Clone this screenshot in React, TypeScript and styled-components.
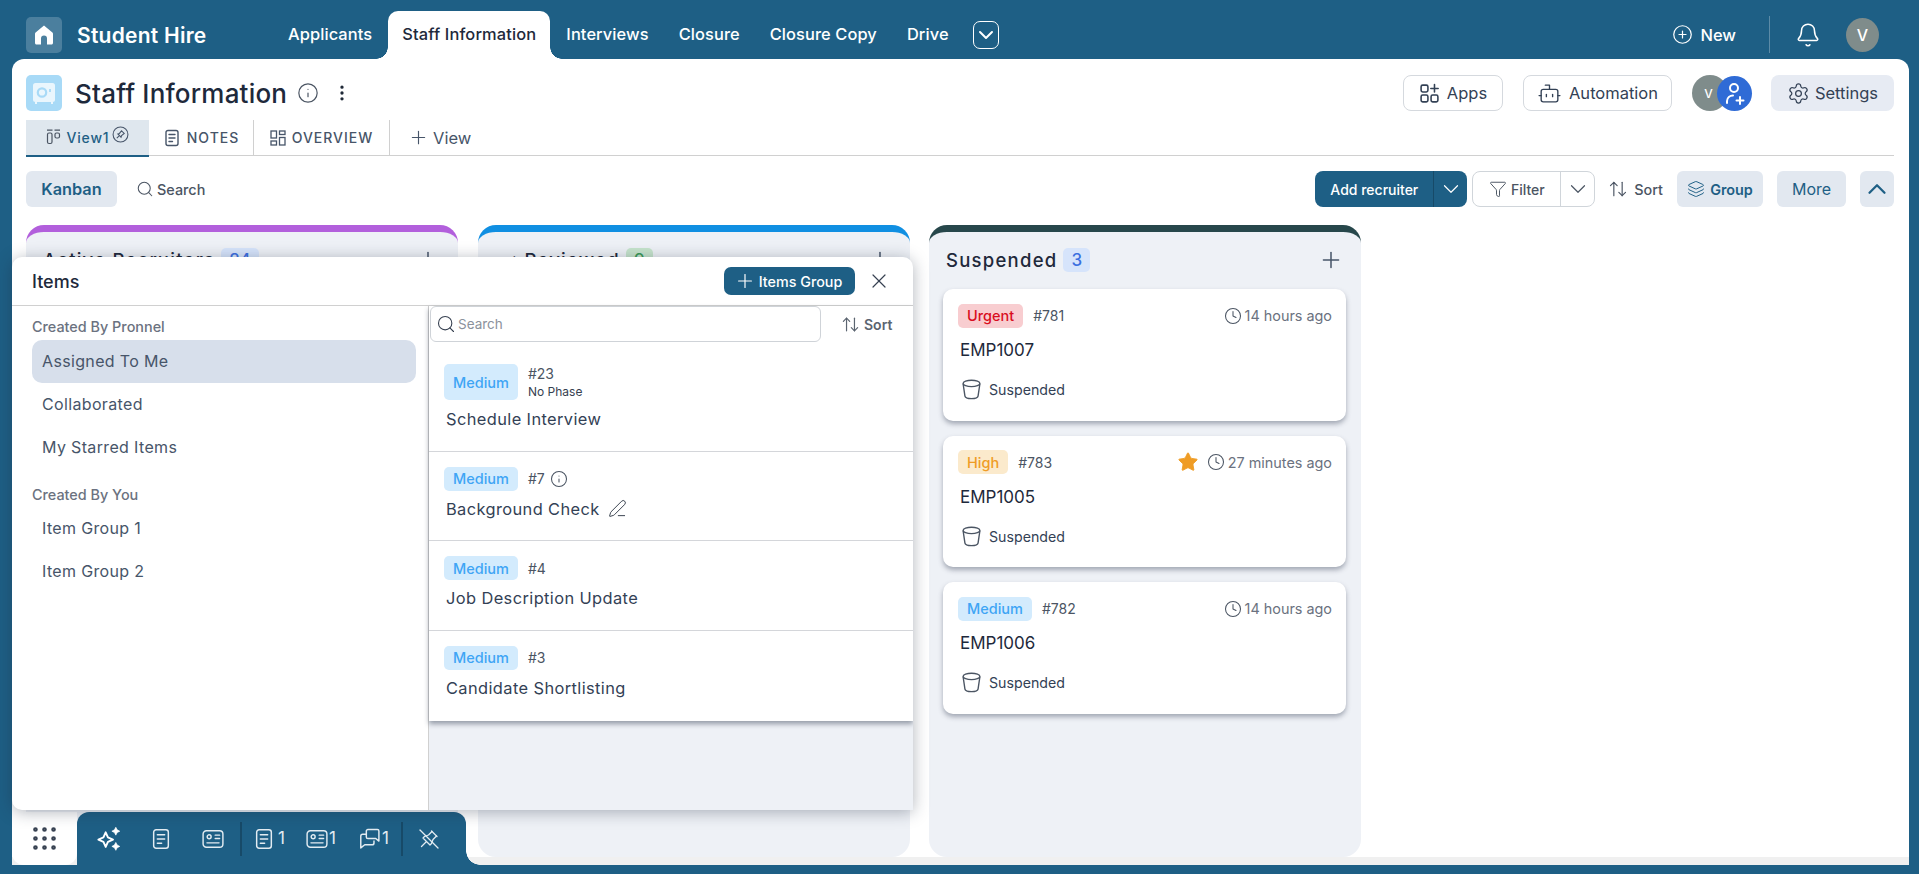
import React from "react";
import styled, { createGlobalStyle } from "styled-components";
import {
  ArrowUpDown,
  Bell,
  Bot,
  ChevronDown,
  ChevronUp,
  CirclePlus,
  Clock,
  EllipsisVertical,
  Funnel,
  Grip,
  Info,
  Layers,
  PenLine,
  Plus,
  Search,
  Settings,
  Star,
  X,
} from "lucide-react";

const BLUE = "#1e5f85";

const GlobalStyle = createGlobalStyle`
  html, body {
    margin: 0;
    padding: 0;
    background: ${BLUE};
  }
  * {
    box-sizing: border-box;
  }
  body {
    font-family: Inter, "Noto Sans", sans-serif;
  }
`;

const Page = styled.div`
  position: relative;
  width: 100%;
  height: 874px;
  overflow: hidden;
  background: ${BLUE};
  display: flex;
  flex-direction: column;
`;

/* top bar */
const TopBar = styled.header`
  height: 59px;
  flex: none;
  display: flex;
  padding: 0 40px 0 26px;
  color: #fff;
`;

const Brand = styled.div`
  display: flex;
  align-items: center;
  gap: 15px;
  width: 248px;
  padding-top: 11px;
`;

const LogoBox = styled.div`
  width: 36px;
  height: 36px;
  border-radius: 5px;
  background: #4b7f9e;
  display: flex;
  align-items: center;
  justify-content: center;
`;

const BrandName = styled.div`
  font-size: 21px;
  font-weight: 600;
  letter-spacing: 0.25px;
`;

const NavTabs = styled.nav`
  display: flex;
  align-items: flex-end;
  gap: 2px;
`;

const NavTab = styled.div<{ $active?: boolean }>`
  position: relative;
  height: 48px;
  padding: 0 14px 3px;
  display: flex;
  align-items: center;
  font-size: 16.4px;
  font-weight: 500;
  letter-spacing: ${(p) => (p.$active ? "0.15px" : "0.1px")};
  border-radius: 10px 10px 0 0;
  background: ${(p) => (p.$active ? "#fff" : "transparent")};
  color: ${(p) => (p.$active ? "#1e293b" : "#fff")};
  ${(p) =>
    p.$active &&
    `
    &::before, &::after {
      content: "";
      position: absolute;
      bottom: 0;
      width: 12px;
      height: 12px;
    }
    &::before {
      left: -12px;
      background: radial-gradient(circle at 0 0, transparent 11.5px, #fff 12px);
    }
    &::after {
      right: -12px;
      background: radial-gradient(circle at 100% 0, transparent 11.5px, #fff 12px);
    }
  `}
`;

const MoreTabs = styled.div`
  align-self: flex-end;
  margin: 0 0 10px 10px;
  width: 26px;
  height: 28px;
  border: 1px solid #fff;
  border-radius: 7px;
  display: flex;
  align-items: center;
  justify-content: center;
`;

const TopRight = styled.div`
  margin-left: auto;
  display: flex;
  align-items: center;
  padding-top: 10px;
`;

const NewButton = styled.div`
  display: flex;
  align-items: center;
  gap: 7px;
  font-size: 16.5px;
  font-weight: 500;
  margin-right: 33px;
`;

const TopDivider = styled.div`
  width: 1px;
  height: 37px;
  background: #5c8ba7;
  margin-right: 25px;
`;

const BellWrap = styled.div`
  display: flex;
  margin-right: 25px;
`;

const UserAvatar = styled.div`
  width: 33px;
  height: 34px;
  border-radius: 50%;
  background: #7f8c8b;
  display: flex;
  align-items: center;
  justify-content: center;
  font-size: 16px;
  font-weight: 500;
`;

/* white main sheet */
const Sheet = styled.main`
  flex: 1;
  min-height: 0;
  margin: 0 10px 9px 12px;
  padding: 16px 15px 0 14px;
  background: #fff;
  border-radius: 12px 12px 0 0;
  border-bottom: 8px solid #f0f0f0;
  display: flex;
  flex-direction: column;
`;

const HeaderRow = styled.div`
  height: 36px;
  flex: none;
  display: flex;
  align-items: center;
`;

const SafeBox = styled.div`
  width: 36px;
  height: 36px;
  border-radius: 5px;
  background: #a8daf7;
  display: flex;
  align-items: center;
  justify-content: center;
`;

const PageTitle = styled.h1`
  margin: 0 0 0 13px;
  font-size: 26px;
  font-weight: 500;
  color: #1e293b;
  letter-spacing: 0.2px;
`;

const TitleIcon = styled.span<{ $gap: number }>`
  display: flex;
  margin-left: ${(p) => p.$gap}px;
  color: #4b5563;
`;

const HeaderActions = styled.div`
  margin-left: auto;
  display: flex;
  align-items: center;
`;

const OutlineButton = styled.div<{ $width: number; $gap: number }>`
  width: ${(p) => p.$width}px;
  height: 36px;
  margin-right: ${(p) => p.$gap}px;
  border: 1px solid #d5d9de;
  border-radius: 8px;
  display: flex;
  align-items: center;
  justify-content: center;
  gap: 7px;
  font-size: 16.5px;
  color: #334155;
`;

const Avatars = styled.div`
  position: relative;
  width: 60px;
  height: 36px;
  margin-right: 19px;
`;

const SmallAvatar = styled.div`
  width: 36px;
  height: 36px;
  padding-right: 3px;
  border-radius: 50%;
  background: #7f8c8b;
  color: #fff;
  font-size: 12px;
  font-weight: 500;
  display: flex;
  align-items: center;
  justify-content: center;
`;

const AddUser = styled.div`
  position: absolute;
  top: 1px;
  right: 0;
  width: 35px;
  height: 35px;
  border-radius: 50%;
  background: #2f6bd6;
  display: flex;
  align-items: center;
  justify-content: center;
`;

const SettingsButton = styled.div`
  width: 123px;
  height: 36px;
  border-radius: 8px;
  background: #e7ebf3;
  color: #334155;
  font-size: 16.5px;
  display: flex;
  align-items: center;
  justify-content: center;
  gap: 5px;
`;

const ViewTabs = styled.div`
  height: 36px;
  margin-top: 9px;
  flex: none;
  display: flex;
  border-bottom: 1.5px solid #d0d0d0;
`;

const ViewTab = styled.div<{ $active?: boolean; $width: number; $line?: boolean }>`
  width: ${(p) => p.$width}px;
  display: flex;
  align-items: center;
  justify-content: center;
  gap: 6px;
  font-size: 14px;
  font-weight: 500;
  letter-spacing: ${(p) => (p.$active ? "0.8px" : "1px")};
  color: ${(p) => (p.$active ? BLUE : "#475569")};
  background: ${(p) => (p.$active ? "#dfe7ee" : "transparent")};
  border-right: ${(p) => (p.$line ? "1px solid #d0d0d0" : "none")};
  margin-bottom: ${(p) => (p.$active ? "-1.5px" : "0")};
  border-bottom: ${(p) => (p.$active ? `2.5px solid ${BLUE}` : "none")};
`;

const AddView = styled.div`
  margin-left: 18px;
  display: flex;
  align-items: center;
  gap: 4px;
  font-size: 16.5px;
  color: #475569;
`;

const Toolbar = styled.div`
  height: 36px;
  margin-top: 15px;
  flex: none;
  display: flex;
  align-items: center;
`;

const SoftButton = styled.div<{ $width: number; $strong?: boolean; $size?: number }>`
  width: ${(p) => p.$width}px;
  height: 36px;
  border-radius: 6px;
  background: #e2e8f0;
  color: ${BLUE};
  display: flex;
  align-items: center;
  justify-content: center;
  gap: 5px;
  font-size: ${(p) => p.$size ?? 14}px;
  font-weight: ${(p) => (p.$strong ? 600 : 400)};
`;

const PlainTool = styled.div<{ $before: number; $after?: number; $gap: number }>`
  margin: 0 ${(p) => p.$after ?? 0}px 0 ${(p) => p.$before}px;
  display: flex;
  align-items: center;
  gap: ${(p) => p.$gap}px;
  font-size: 14.4px;
  font-weight: 500;
  color: #4b5563;
`;

const ToolbarRight = styled.div`
  margin-left: auto;
  display: flex;
  align-items: center;
  gap: 5px;
`;

const SplitButton = styled.div<{ $outline?: boolean; $width: number }>`
  width: ${(p) => p.$width}px;
  height: 36px;
  border-radius: 8px;
  display: flex;
  align-items: center;
  font-size: 14px;
  font-weight: 500;
  background: ${(p) => (p.$outline ? "#fff" : BLUE)};
  color: ${(p) => (p.$outline ? "#4b5563" : "#fff")};
  border: ${(p) => (p.$outline ? "1px solid #d0d5da" : "none")};
`;

const SplitMain = styled.div`
  flex: 1;
  height: 100%;
  display: flex;
  align-items: center;
  justify-content: center;
  gap: 4px;
`;

const SplitArrow = styled.div<{ $outline?: boolean }>`
  width: 34px;
  height: 100%;
  display: flex;
  align-items: center;
  justify-content: center;
  border-left: 1px solid ${(p) => (p.$outline ? "#d0d5da" : "#174a68")};
`;

const SoftGroup = styled.div`
  display: flex;
  align-items: center;
  gap: 14px;
`;

/* kanban */
const Board = styled.div`
  flex: 1;
  min-height: 0;
  margin-top: 18px;
  display: flex;
  gap: 19.5px;
`;

const Column = styled.section<{ $color: string }>`
  width: 432px;
  background: #eef1f6;
  border-top: 7px solid ${(p) => p.$color};
  border-radius: 18px;
  padding: 16px 15px 0 14px;
`;

const ColumnHead = styled.div`
  height: 24px;
  padding: 0 0 0 3px;
  display: flex;
  align-items: center;
  gap: 6px;
  margin-bottom: 17px;
`;

const ColumnName = styled.div`
  font-size: 18.5px;
  font-weight: 500;
  letter-spacing: 1.25px;
  color: #1e293b;
`;

const CountBadge = styled.div<{ $bg: string; $fg: string }>`
  height: 24px;
  min-width: 25px;
  padding: 0 8px;
  border-radius: 5px;
  background: ${(p) => p.$bg};
  color: ${(p) => p.$fg};
  font-size: 17px;
  font-weight: 500;
  display: flex;
  align-items: center;
  justify-content: center;
`;

const HeadPlus = styled.span`
  margin-left: auto;
  display: flex;
  margin-right: 2px;
  color: #475569;
`;

const CardList = styled.div`
  display: flex;
  flex-direction: column;
  gap: 15px;
`;

const Card = styled.article`
  height: 131.5px;
  padding: 14.5px 14px 0 15px;
  background: #fff;
  border-radius: 10px;
  box-shadow: 0 3px 5px rgba(70, 80, 100, 0.45);
`;

const CardTop = styled.div`
  height: 24px;
  display: flex;
  align-items: center;
`;

const Priority = styled.div<{ $level: string; $tall?: boolean }>`
  height: ${(p) => (p.$tall ? "36px" : "24px")};
  padding: 0 9px;
  border-radius: 5px;
  font-size: 14.5px;
  font-weight: 500;
  display: flex;
  align-items: center;
  background: ${(p) =>
    p.$level === "Urgent" ? "#f8cdd0" : p.$level === "High" ? "#fbeacc" : "#d3ebfd"};
  color: ${(p) =>
    p.$level === "Urgent" ? "#d90d1e" : p.$level === "High" ? "#ef9c25" : "#3fa5f5"};
`;

const TicketNo = styled.span`
  margin-left: 10px;
  font-size: 14px;
  color: #4b5563;
`;

const TimeAgo = styled.div`
  margin-left: auto;
  display: flex;
  align-items: center;
  gap: 3px;
  font-size: 14.4px;
  color: #6b7280;
`;

const StarMark = styled.span`
  display: flex;
  margin-right: 5px;
  color: #ef9c25;
`;

const ClockMark = styled.span`
  display: flex;
  color: #4b5563;
`;

const CardTitle = styled.div`
  margin: 12.5px 0 0 2px;
  height: 20px;
  line-height: 20px;
  font-size: 17px;
  color: #1e293b;
`;

const CardStatus = styled.div`
  margin: 19.5px 0 0 2px;
  height: 20px;
  display: flex;
  align-items: center;
  gap: 6px;
  font-size: 14.2px;
  color: #334155;
`;

/* items popover */
const Popover = styled.aside`
  position: absolute;
  z-index: 3;
  left: 12px;
  top: 257px;
  width: 901px;
  height: 553px;
  background: #fff;
  border-radius: 10px 10px 0 10px;
  box-shadow: 0 2px 16px rgba(30, 40, 60, 0.35);
  display: flex;
  flex-direction: column;
  overflow: hidden;
`;

const PopoverHead = styled.div`
  height: 49px;
  flex: none;
  padding: 0 22px 0 20px;
  display: flex;
  align-items: center;
  border-bottom: 1.5px solid #d0d0d0;
`;

const PopoverTitle = styled.div`
  font-size: 18px;
  font-weight: 500;
  color: #1e293b;
`;

const GroupButton = styled.div`
  margin-left: auto;
  width: 131px;
  height: 28px;
  padding-right: 3px;
  border-radius: 7px;
  background: ${BLUE};
  color: #fff;
  font-size: 14.3px;
  font-weight: 500;
  display: flex;
  align-items: center;
  justify-content: center;
  gap: 3px;
`;

const CloseMark = styled.span`
  display: flex;
  margin-left: 12px;
  color: #374151;
`;

const PopoverBody = styled.div`
  flex: 1;
  min-height: 0;
  display: flex;
`;

const SidePane = styled.div`
  width: 417px;
  flex: none;
  padding: 12px 12px 0 20px;
  border-right: 1.5px solid #d0d0d0;
`;

const SideLabel = styled.div<{ $top?: number; $below?: number }>`
  height: 18px;
  line-height: 18px;
  margin: ${(p) => p.$top ?? 0}px 0 ${(p) => p.$below ?? 4}px;
  font-size: 14.4px;
  font-weight: 500;
  color: #6b7280;
`;

const SideItem = styled.div<{ $active?: boolean }>`
  height: 43px;
  padding: 0 0 1px 10px;
  border-radius: 10px;
  display: flex;
  align-items: center;
  font-size: 16px;
  letter-spacing: 0.35px;
  color: #475569;
  background: ${(p) => (p.$active ? "#d7dfeb" : "transparent")};
`;

const ListPane = styled.div`
  flex: 1;
  min-width: 0;
  background: #eef1f6;
`;

const ListBox = styled.div`
  background: #fff;
  box-shadow: 0 3px 5px rgba(40, 50, 70, 0.45);
`;

const SearchRow = styled.div`
  height: 36px;
  display: flex;
  align-items: center;
  padding-left: 1px;
`;

const SearchField = styled.div`
  width: 391px;
  height: 36px;
  border: 1px solid #cfd3d8;
  border-radius: 6px;
  padding-left: 5px;
  display: flex;
  align-items: center;
  gap: 2px;
  font-size: 13.5px;
  color: #8b929c;
`;

const SortBold = styled.div`
  margin-left: 20px;
  display: flex;
  align-items: center;
  gap: 4px;
  font-size: 14px;
  font-weight: 600;
  color: #5b6470;
`;

const Items = styled.div`
  padding-top: 7px;
`;

const ItemTitle = styled.div`
  margin: 8px 0 0 2px;
  height: 20px;
  line-height: 20px;
  display: flex;
  align-items: center;
  gap: 8px;
  font-size: 16.4px;
  letter-spacing: 0.4px;
  color: #334155;
`;

const Item = styled.div`
  padding: 15px 0 21.5px 15px;
  border-bottom: 1.5px solid #d4d6da;
  &:first-child ${ItemTitle} {
    margin-top: 9px;
  }
  &:last-child {
    border-bottom: none;
    padding-bottom: 23px;
  }
`;

const ItemTop = styled.div`
  display: flex;
  align-items: center;
  min-height: 24px;
`;

const ItemMeta = styled.div`
  margin-left: 10px;
  display: flex;
  flex-direction: column;
  gap: 2px;
`;

const ItemNo = styled.div`
  display: flex;
  align-items: center;
  gap: 5px;
  font-size: 14px;
  color: #4b5563;
`;

const ItemPhase = styled.div`
  font-size: 12px;
  color: #374151;
`;

/* bottom dock */
const DockArea = styled.div`
  position: absolute;
  z-index: 2;
  left: 12px;
  top: 812px;
  height: 53px;
  display: flex;
`;

const DockHandle = styled.div`
  width: 65px;
  height: 53px;
  background: #fff;
  border-radius: 0 0 12px 12px;
  display: flex;
  align-items: center;
  justify-content: center;
  color: #374151;
`;

const Dock = styled.div`
  position: relative;
  width: 389px;
  height: 53px;
  background: ${BLUE};
  border-radius: 12px 12px 0 0;
  display: flex;
  align-items: center;
  padding-left: 18px;
  color: #e3ecf2;
  &::after {
    content: "";
    position: absolute;
    left: 100%;
    bottom: 0;
    width: 14px;
    height: 14px;
    background: radial-gradient(circle at 100% 0, transparent 13.5px, ${BLUE} 14px);
  }
`;

const DockIcon = styled.div<{ $width: number; $gap?: number }>`
  width: ${(p) => p.$width}px;
  display: flex;
  align-items: center;
  gap: ${(p) => p.$gap ?? 3}px;
  font-size: 17px;
  line-height: 1;
`;

const DockDivider = styled.div<{ $after: number }>`
  width: 2px;
  height: 34px;
  background: #174a68;
  margin-right: ${(p) => p.$after}px;
`;

/* drawn icons */
const HomeIcon = () => (
  <svg width="24" height="24" viewBox="0 0 24 24" fill="#fff">
    <path d="M12 2.5 3.6 9.6c-.4.3-.6.8-.6 1.300V20c0 .9.7 1.500 1.500 1.500H9v-6a3 3 0 0 1 6 0v6h4.500c.8 0 1.500-.6 1.500-1.500v-9.100c0-.5-.2-1-.6-1.300z" />
  </svg>
);

const SafeIcon = () => (
  <svg width="28" height="28" viewBox="0 0 28 28" fill="none">
    <rect x="3" y="4" width="22" height="19" rx="2.5" fill="#eaf6fd" />
    <circle cx="12" cy="13.500" r="4.200" stroke="#a8daf7" strokeWidth="2.200" />
    <path d="M20 10v3" stroke="#a8daf7" strokeWidth="1.800" />
    <path d="M6 23v2M22 23v2" stroke="#eaf6fd" strokeWidth="2" />
  </svg>
);

const AppsIcon = () => (
  <svg width="21" height="21" viewBox="0 0 20 20" fill="none" stroke="#334155" strokeWidth="1.500">
    <rect x="2" y="2" width="6.500" height="6.500" rx="1.500" />
    <rect x="2" y="11.500" width="6.500" height="6.500" rx="1.500" />
    <rect x="11.500" y="11.500" width="6.500" height="6.500" rx="1.500" />
    <path d="M14.750 1.500v7M11.250 5.250h7" strokeLinecap="round" />
  </svg>
);

const UserPlusIcon = () => (
  <svg width="24" height="26" viewBox="0 0 24 26" fill="none" stroke="#fff" strokeWidth="2" strokeLinecap="round">
    <circle cx="11" cy="7" r="4" />
    <path d="M4 22v-2a6 6 0 0 1 6-5.500" />
    <path d="M17 16v7M13.500 19.500h7" />
  </svg>
);

const ViewIcon = () => (
  <svg width="15" height="16" viewBox="0 0 15 16" fill="none" stroke="#4b5563" strokeWidth="1.200">
    <path d="M1 1.200h5.500M8.500 1.200h5.500" />
    <rect x="1.500" y="4" width="4.500" height="10.500" rx="1.500" />
    <rect x="9" y="4" width="4.500" height="5" rx="1.500" />
  </svg>
);

const PinBadge = styled(({ className }: { className?: string }) => (
  <svg className={className} width="17" height="17" viewBox="0 0 16 16" fill="none" stroke="#475569" strokeWidth="1">
    <circle cx="8" cy="8" r="7" />
    <path d="M9 4.500 11.500 7 9 9 8.500 10.500 5.500 7.500 7 7zM6.500 9.500 4.500 11.500" />
  </svg>
))`
  margin: 0 0 6px -3px;
`;

const NoteIcon = ({ size = 18, color = "#475569", width = 1.400 }: { size?: number; color?: string; width?: number }) => (
  <svg width={size} height={size} viewBox="0 0 18 18" fill="none" stroke={color} strokeWidth={width} strokeLinecap="round">
    <rect x="3" y="1.500" width="12" height="15" rx="2" />
    <path d="M6 5.500h6M6 9h6M6 12.500h3.500" />
  </svg>
);

const OverviewIcon = () => (
  <svg width="16" height="16" viewBox="0 0 16 16" fill="none" stroke="#475569" strokeWidth="1.300">
    <rect x="1" y="1" width="5.500" height="7" />
    <rect x="9.500" y="1" width="5.500" height="3.500" />
    <rect x="1" y="11" width="5.500" height="4" />
    <rect x="9.500" y="7.500" width="5.500" height="7.500" />
  </svg>
);

const BucketIcon = () => (
  <svg width="23" height="23" viewBox="0 0 20 20" fill="none" stroke="#4b5563" strokeWidth="1.200">
    <ellipse cx="10" cy="4.700" rx="7.300" ry="2.800" />
    <path d="M2.700 5 4.300 15.700c.2 1.300 2.400 2.200 5.700 2.200s5.500-.9 5.700-2.200L17.300 5" />
  </svg>
);

const SparkIcon = () => (
  <svg width="27" height="27" viewBox="0 0 24 24" fill="none" stroke="#fff" strokeWidth="1.700" strokeLinejoin="round">
    <path d="M9.500 6.500 11.500 11l4.500 2-4.500 2-2 4.500-2-4.500-4.500-2 4.500-2z" />
    <path d="M18.500 2 19.700 4.300 22 5.500 19.700 6.700 18.500 9 17.300 6.700 15 5.500 17.300 4.300z" fill="#fff" strokeWidth="0.600" />
    <path d="M18.500 15.500 19.700 17.800 22 19 19.700 20.200 18.500 22.500 17.300 20.200 15 19 17.300 17.800z" fill="#fff" strokeWidth="0.600" />
  </svg>
);

const ContactIcon = () => (
  <svg width="22" height="20" viewBox="0 0 20 18" fill="none" stroke="#e3ecf2" strokeWidth="1.300" strokeLinecap="round">
    <rect x="1" y="1.500" width="18" height="15" rx="3" />
    <circle cx="6.500" cy="7" r="1.800" />
    <path d="M12 5.500h4M12 8.500h4M4.500 12.500h11" />
  </svg>
);

const ChatIcon = () => (
  <svg width="22" height="21" viewBox="0 0 21 20" fill="none" stroke="#e3ecf2" strokeWidth="1.400" strokeLinejoin="round">
    <path d="M7 6h-3.500c-1 0-1.800.8-1.800 1.800V19l3.800-3h7c1 0 1.800-.8 1.800-1.800V12" />
    <path d="M7 2.800C7 2 7.700 1.500 8.500 1.500h9c.8 0 1.500.6 1.500 1.300v9.700l-3-2.500h-7.500C7.700 10 7 9.400 7 8.500z" />
  </svg>
);

const UnpinIcon = () => (
  <svg width="24" height="24" viewBox="0 0 24 24" fill="none" stroke="#e3ecf2" strokeWidth="1.300" strokeLinecap="round" strokeLinejoin="round">
    <path d="M3 3l18 18" />
    <path d="M15 4.500 11.500 8l-4 1.500L6 11l7 7 1.500-1.500 1.500-4L19.500 9" />
    <path d="M9 15l-4.500 4.500" />
    <path d="M14.500 4 20 9.500" />
  </svg>
);

type CardData = { level: string; no: string; title: string; time: string; starred?: boolean };

const cards: CardData[] = [
  { level: "Urgent", no: "#781", title: "EMP1007", time: "14 hours ago" },
  { level: "High", no: "#783", title: "EMP1005", time: "27 minutes ago", starred: true },
  { level: "Medium", no: "#782", title: "EMP1006", time: "14 hours ago" },
];

const navTabs = ["Applicants", "Staff Information", "Interviews", "Closure", "Closure Copy", "Drive"];

export default function App() {
  return (
    <Page>
      <GlobalStyle />
      <TopBar>
        <Brand>
          <LogoBox>
            <HomeIcon />
          </LogoBox>
          <BrandName>Student Hire</BrandName>
        </Brand>
        <NavTabs>
          {navTabs.map((tab) => (
            <NavTab key={tab} $active={tab === "Staff Information"}>
              {tab}
            </NavTab>
          ))}
        </NavTabs>
        <MoreTabs>
          <ChevronDown size={24} strokeWidth={2} />
        </MoreTabs>
        <TopRight>
          <NewButton>
            <CirclePlus size={21} strokeWidth={1.4} />
            New
          </NewButton>
          <TopDivider />
          <BellWrap>
            <Bell size={26} strokeWidth={1.4} />
          </BellWrap>
          <UserAvatar>V</UserAvatar>
        </TopRight>
      </TopBar>

      <Sheet>
        <HeaderRow>
          <SafeBox>
            <SafeIcon />
          </SafeBox>
          <PageTitle>Staff Information</PageTitle>
          <TitleIcon $gap={10}>
            <Info size={22} strokeWidth={1.3} />
          </TitleIcon>
          <TitleIcon $gap={13}>
            <EllipsisVertical size={20} strokeWidth={2} color="#1f2937" />
          </TitleIcon>
          <HeaderActions>
            <OutlineButton $width={100} $gap={20}>
              <AppsIcon />
              Apps
            </OutlineButton>
            <OutlineButton $width={149} $gap={20}>
              <Bot size={25} strokeWidth={1.3} />
              Automation
            </OutlineButton>
            <Avatars>
              <SmallAvatar>V</SmallAvatar>
              <AddUser>
                <UserPlusIcon />
              </AddUser>
            </Avatars>
            <SettingsButton>
              <Settings size={23} strokeWidth={1.3} />
              Settings
            </SettingsButton>
          </HeaderActions>
        </HeaderRow>

        <ViewTabs>
          <ViewTab $active $width={123}>
            <ViewIcon />
            View1
            <PinBadge />
          </ViewTab>
          <ViewTab $width={105} $line>
            <NoteIcon />
            NOTES
          </ViewTab>
          <ViewTab $width={136} $line>
            <OverviewIcon />
            OVERVIEW
          </ViewTab>
          <AddView>
            <Plus size={21} strokeWidth={1.3} />
            View
          </AddView>
        </ViewTabs>

        <Toolbar>
          <SoftButton $width={91} $strong $size={16.3}>
            Kanban
          </SoftButton>
          <PlainTool $before={19} $gap={3}>
            <Search size={18} strokeWidth={1.4} />
            Search
          </PlainTool>
          <ToolbarRight>
            <SplitButton $width={152}>
              <SplitMain>Add recruiter</SplitMain>
              <SplitArrow>
                <ChevronDown size={26} strokeWidth={1.1} />
              </SplitArrow>
            </SplitButton>
            <SplitButton $outline $width={123}>
              <SplitMain>
                <Funnel size={18} strokeWidth={1.3} />
                Filter
              </SplitMain>
              <SplitArrow $outline>
                <ChevronDown size={26} strokeWidth={1.1} />
              </SplitArrow>
            </SplitButton>
            <PlainTool $before={8} $after={9} $gap={6}>
              <ArrowUpDown size={20} strokeWidth={1.4} />
              Sort
            </PlainTool>
            <SoftGroup>
              <SoftButton $width={86} $strong $size={14.4}>
                <Layers size={18} strokeWidth={1.3} />
                Group
              </SoftButton>
              <SoftButton $width={69} $size={16}>
                More
              </SoftButton>
              <SoftButton $width={34}>
                <ChevronUp size={30} strokeWidth={1.8} />
              </SoftButton>
            </SoftGroup>
          </ToolbarRight>
        </Toolbar>

        <Board>
          <Column $color="#b25fdc">
            <ColumnHead>
              <ColumnName>Active Recruiters</ColumnName>
              <CountBadge $bg="#d6e4fb" $fg="#3b6fe0">
                24
              </CountBadge>
              <HeadPlus>
                <Plus size={26} strokeWidth={1.4} />
              </HeadPlus>
            </ColumnHead>
          </Column>
          <Column $color="#108fe2">
            <ColumnHead>
              <ColumnName>&nbsp;✓&nbsp;Reviewed</ColumnName>
              <CountBadge $bg="#c6e4cc" $fg="#3b9a5a">
                9
              </CountBadge>
              <HeadPlus>
                <Plus size={26} strokeWidth={1.4} />
              </HeadPlus>
            </ColumnHead>
          </Column>
          <Column $color="#27474b">
            <ColumnHead>
              <ColumnName>Suspended</ColumnName>
              <CountBadge $bg="#d6e4fb" $fg="#3b6fe0">
                3
              </CountBadge>
              <HeadPlus>
                <Plus size={26} strokeWidth={1.4} />
              </HeadPlus>
            </ColumnHead>
            <CardList>
              {cards.map((card) => (
                <Card key={card.no}>
                  <CardTop>
                    <Priority $level={card.level}>{card.level}</Priority>
                    <TicketNo>{card.no}</TicketNo>
                    <TimeAgo>
                      {card.starred && (
                        <StarMark>
                          <Star size={22} fill="#ef9c25" strokeWidth={1} />
                        </StarMark>
                      )}
                      <ClockMark>
                        <Clock size={18} strokeWidth={1.4} />
                      </ClockMark>
                      {card.time}
                    </TimeAgo>
                  </CardTop>
                  <CardTitle>{card.title}</CardTitle>
                  <CardStatus>
                    <BucketIcon />
                    Suspended
                  </CardStatus>
                </Card>
              ))}
            </CardList>
          </Column>
        </Board>
      </Sheet>

      <DockArea>
        <DockHandle>
          <Grip size={31} strokeWidth={1.6} />
        </DockHandle>
        <Dock>
          <DockIcon $width={55}>
            <SparkIcon />
          </DockIcon>
          <DockIcon $width={52}>
            <NoteIcon size={22} color="#e3ecf2" width={1.2} />
          </DockIcon>
          <DockIcon $width={38}>
            <ContactIcon />
          </DockIcon>
          <DockDivider $after={11} />
          <DockIcon $width={53}>
            <NoteIcon size={22} color="#e3ecf2" width={1.2} />1
          </DockIcon>
          <DockIcon $width={53} $gap={1}>
            <ContactIcon />1
          </DockIcon>
          <DockIcon $width={42} $gap={1}>
            <ChatIcon />1
          </DockIcon>
          <DockDivider $after={14} />
          <DockIcon $width={24}>
            <UnpinIcon />
          </DockIcon>
        </Dock>
      </DockArea>

      <Popover>
        <PopoverHead>
          <PopoverTitle>Items</PopoverTitle>
          <GroupButton>
            <Plus size={22} strokeWidth={1.3} />
            Items Group
          </GroupButton>
          <CloseMark>
            <X size={24} strokeWidth={1.2} />
          </CloseMark>
        </PopoverHead>
        <PopoverBody>
          <SidePane>
            <SideLabel>Created By Pronnel</SideLabel>
            <SideItem $active>Assigned To Me</SideItem>
            <SideItem>Collaborated</SideItem>
            <SideItem>My Starred Items</SideItem>
            <SideLabel $top={17} $below={3}>
              Created By You
            </SideLabel>
            <SideItem>Item Group 1</SideItem>
            <SideItem>Item Group 2</SideItem>
          </SidePane>
          <ListPane>
            <ListBox>
              <SearchRow>
                <SearchField>
                  <Search size={20} strokeWidth={1.3} color="#374151" />
                  Search
                </SearchField>
                <SortBold>
                  <ArrowUpDown size={19} strokeWidth={1.5} />
                  Sort
                </SortBold>
              </SearchRow>
              <Items>
                <Item>
                  <ItemTop>
                    <Priority $level="Medium" $tall>
                      Medium
                    </Priority>
                    <ItemMeta>
                      <ItemNo>#23</ItemNo>
                      <ItemPhase>No Phase</ItemPhase>
                    </ItemMeta>
                  </ItemTop>
                  <ItemTitle>Schedule Interview</ItemTitle>
                </Item>
                <Item>
                  <ItemTop>
                    <Priority $level="Medium">Medium</Priority>
                    <ItemMeta>
                      <ItemNo>
                        #7
                        <Info size={18} strokeWidth={1.4} />
                      </ItemNo>
                    </ItemMeta>
                  </ItemTop>
                  <ItemTitle>
                    Background Check
                    <PenLine size={19} strokeWidth={1.1} color="#1f2937" />
                  </ItemTitle>
                </Item>
                <Item>
                  <ItemTop>
                    <Priority $level="Medium">Medium</Priority>
                    <ItemMeta>
                      <ItemNo>#4</ItemNo>
                    </ItemMeta>
                  </ItemTop>
                  <ItemTitle>Job Description Update</ItemTitle>
                </Item>
                <Item>
                  <ItemTop>
                    <Priority $level="Medium">Medium</Priority>
                    <ItemMeta>
                      <ItemNo>#3</ItemNo>
                    </ItemMeta>
                  </ItemTop>
                  <ItemTitle>Candidate Shortlisting</ItemTitle>
                </Item>
              </Items>
            </ListBox>
          </ListPane>
        </PopoverBody>
      </Popover>
    </Page>
  );
}
